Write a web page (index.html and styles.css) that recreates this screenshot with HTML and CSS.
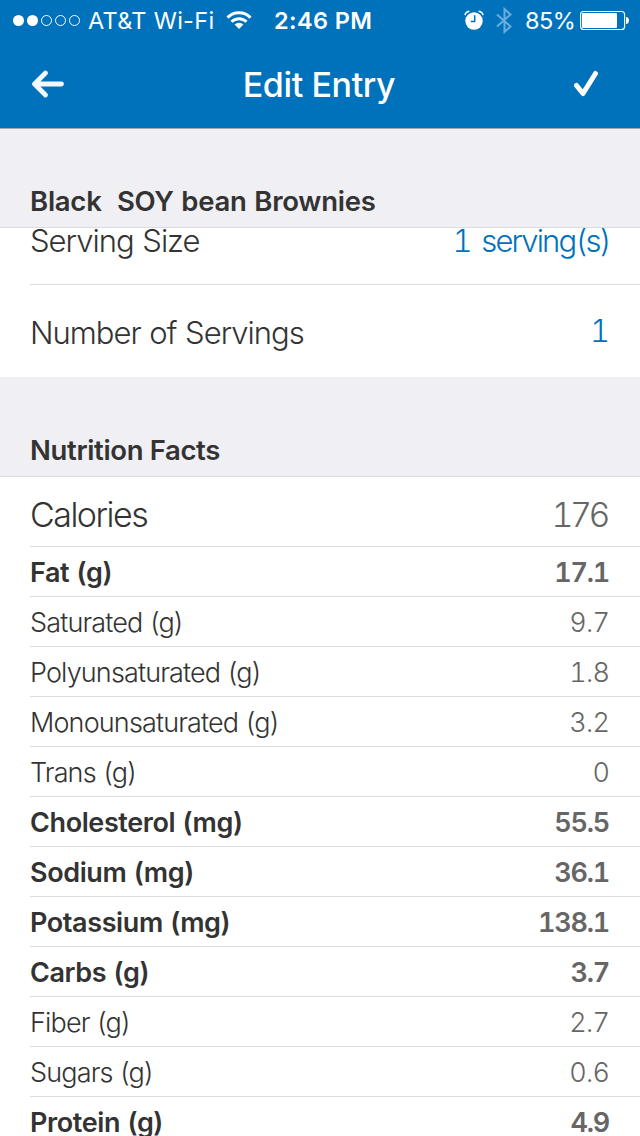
FILE: index.html
```html
<!DOCTYPE html>
<html lang="en">
<head>
    <meta charset="utf-8">
    <title>Edit Entry</title>
    <link rel="stylesheet" href="styles.css">
</head>
<body>
    <header class="header">
        <div class="statusBar">
            <svg class="signal" width="68" height="12" viewBox="0 0 68 12">
                <g fill="#fff"><circle cx="6.500" cy="6.500" r="5.500"/><circle cx="20.500" cy="6.500" r="5.500"/></g>
                <g fill="none" stroke="#fff"><circle cx="34.500" cy="6.500" r="5"/><circle cx="48.500" cy="6.500" r="5"/><circle cx="62.500" cy="6.500" r="5"/></g>
            </svg>
            <span class="carrier">AT&amp;T Wi-Fi</span>
            <svg class="wifi" width="26" height="18" viewBox="0 0 26 18">
                <g fill="none" stroke="#fff" stroke-width="3">
                    <path d="M1.500 6.600a16.200 16.200 0 0 1 23 0"/>
                    <path d="M5.500 10.800a10.600 10.600 0 0 1 15 0"/>
                </g>
                <path fill="#fff" d="M8.600 13.600a6.200 6.200 0 0 1 8.800 0L13 18z"/>
            </svg>
            <span class="time">2:46 PM</span>
            <svg class="alarm" width="20" height="20" viewBox="0 0 20 20">
                <circle cx="10" cy="11" r="8.700" fill="#fff"/>
                <path d="M1 5.200Q1.500 1.800 5.400 1.200M19 5.200Q18.500 1.800 14.600 1.200" fill="none" stroke="#fff" stroke-width="1.500"/>
                <path d="M10.700 5.200v6.200h-4" fill="none" stroke="#0072bc" stroke-width="1.500"/>
            </svg>
            <svg class="bluetooth" width="16" height="27" viewBox="0 0 16 27">
                <path d="M1 7.500L14.500 19.500L8.500 25V2L14.500 7.500L1 19.500" fill="none" stroke="#6aaedb" stroke-width="2"/>
            </svg>
            <span class="percent">85%</span>
            <svg class="battery" width="49" height="20" viewBox="0 0 49 20">
                <rect x=".6" y="1.500" width="44" height="18" rx="3" fill="none" stroke="#fff" stroke-width="1.100"/>
                <rect x="2" y="3" width="35" height="15" rx="1" fill="#fff"/>
                <path d="M46 7c4 0 4 7 0 7z" fill="#fff"/>
            </svg>
        </div>
        <div class="navBar">
            <svg class="back" width="34" height="30" viewBox="0 0 34 30">
                <path d="M15.500 4L4.500 15L15.500 26M4.500 15H31.500" fill="none" stroke="#f4f7fa" stroke-width="4.800" stroke-linecap="round" stroke-linejoin="round"/>
            </svg>
            <h1>Edit Entry</h1>
            <svg class="save" width="26" height="28" viewBox="0 0 26 28">
                <path d="M2.500 15.500L9 23.500L21.500 3.500" fill="none" stroke="#fff" stroke-width="5" stroke-linecap="round" stroke-linejoin="round"/>
            </svg>
        </div>
    </header>

    <h2 class="sectionTitle"><span class="foodName">Black&nbsp; SOY bean Brownies</span></h2>
    <div class="servings">
        <div class="row servingSize"><span>Serving Size</span><span class="value servingValue">1 serving(s)</span></div>
        <div class="row servingCount"><span>Number of Servings</span><span class="value countValue">1</span></div>
    </div>

    <h2 class="sectionTitle facts">Nutrition Facts</h2>
    <div class="nutrition">
        <div class="row calories"><span>Calories</span><span class="value">176</span></div>
        <div class="row main"><span>Fat (g)</span><span class="value">17.1</span></div>
        <div class="row"><span>Saturated (g)</span><span class="value">9.7</span></div>
        <div class="row"><span>Polyunsaturated (g)</span><span class="value">1.8</span></div>
        <div class="row"><span>Monounsaturated (g)</span><span class="value">3.2</span></div>
        <div class="row"><span>Trans (g)</span><span class="value">0</span></div>
        <div class="row main"><span>Cholesterol (mg)</span><span class="value">55.5</span></div>
        <div class="row main"><span>Sodium (mg)</span><span class="value">36.1</span></div>
        <div class="row main"><span>Potassium (mg)</span><span class="value">138.1</span></div>
        <div class="row main"><span>Carbs (g)</span><span class="value">3.7</span></div>
        <div class="row"><span>Fiber (g)</span><span class="value">2.7</span></div>
        <div class="row"><span>Sugars (g)</span><span class="value">0.6</span></div>
        <div class="row main"><span>Protein (g)</span><span class="value">4.9</span></div>
    </div>
</body>
</html>
```
FILE: styles.css
```css
* {
    box-sizing: border-box;
}

body {
    margin: 0;
    height: 1136px;
    overflow: hidden;
    background-color: #fff;
    color: #333;
    font-family: Inter, "Liberation Sans", sans-serif;
}

.header {
    height: 129px;
    background-color: #0072bc;
    border-bottom: 1px solid #a5a8ab;
    color: #fff;
}

.statusBar {
    display: flex;
    align-items: center;
    height: 40px;
    padding-left: 12px;
    font-size: 23.5px;
    white-space: nowrap;
}

.statusBar svg {
    flex: none;
}

.signal {
    overflow: visible;
}

.carrier {
    width: 126px;
    margin-left: 8px;
    letter-spacing: 0.3px;
}

.wifi {
    margin-left: 12px;
}

.time {
    width: 98px;
    margin-left: 22px;
    font-weight: 600;
    letter-spacing: 0.4px;
}

.alarm {
    margin-left: 92px;
}

.bluetooth {
    margin-left: 12px;
}

.percent {
    width: 50px;
    margin-left: 13px;
    letter-spacing: -0.5px;
}

.battery {
    margin-left: 5px;
}

.navBar {
    display: flex;
    align-items: center;
    justify-content: space-between;
    height: 88px;
    padding: 0 40px 0 30px;
}

h1 {
    margin: 0;
    font-size: 34px;
    font-weight: 500;
    letter-spacing: -0.4px;
}

.sectionTitle {
    display: flex;
    align-items: flex-end;
    height: 99px;
    margin: 0;
    padding: 0 30px 9px;
    background-color: #efeff4;
    border-bottom: 1px solid #dcdcde;
    font-size: 27.5px;
    font-weight: 600;
    line-height: 34px;
}

.foodName {
    letter-spacing: -0.25px;
    word-spacing: 1px;
}

.facts {
    height: 100px;
    letter-spacing: -0.35px;
}

.row {
    display: flex;
    align-items: center;
    justify-content: space-between;
    height: 50px;
    margin-left: 30px;
    padding: 2px 31px 0 0;
    border-bottom: 1px solid #dcdcde;
    font-size: 27px;
    font-weight: 300;
    letter-spacing: -0.85px;
    word-spacing: 1px;
    white-space: nowrap;
}

.servings .row {
    font-size: 31px;
    letter-spacing: -1px;
}

/* scrolled up against the section title */
.servings .servingSize {
    align-items: flex-start;
    height: 57px;
    padding: 0 30px 0 0;
    line-height: 26px;
}

.servings .servingCount {
    height: 92px;
    padding-top: 3px;
    border-bottom: none;
}

.value {
    font-variant-numeric: tabular-nums;
}

.servings .value {
    color: #0072bc;
}

.servingValue {
    letter-spacing: -1.85px;
    word-spacing: 4px;
}

.countValue {
    padding-bottom: 4px;
}

.nutrition .calories {
    height: 70px;
    padding-top: 5px;
    font-size: 34px;
    letter-spacing: -1.5px;
}

.nutrition .main {
    font-weight: 600;
    letter-spacing: -0.4px;
}

.nutrition .value {
    color: #666;
}

.nutrition .main .value {
    letter-spacing: -1.2px;
}

.nutrition .calories .value {
    padding-right: 2px;
    letter-spacing: -3.5px;
}
```
